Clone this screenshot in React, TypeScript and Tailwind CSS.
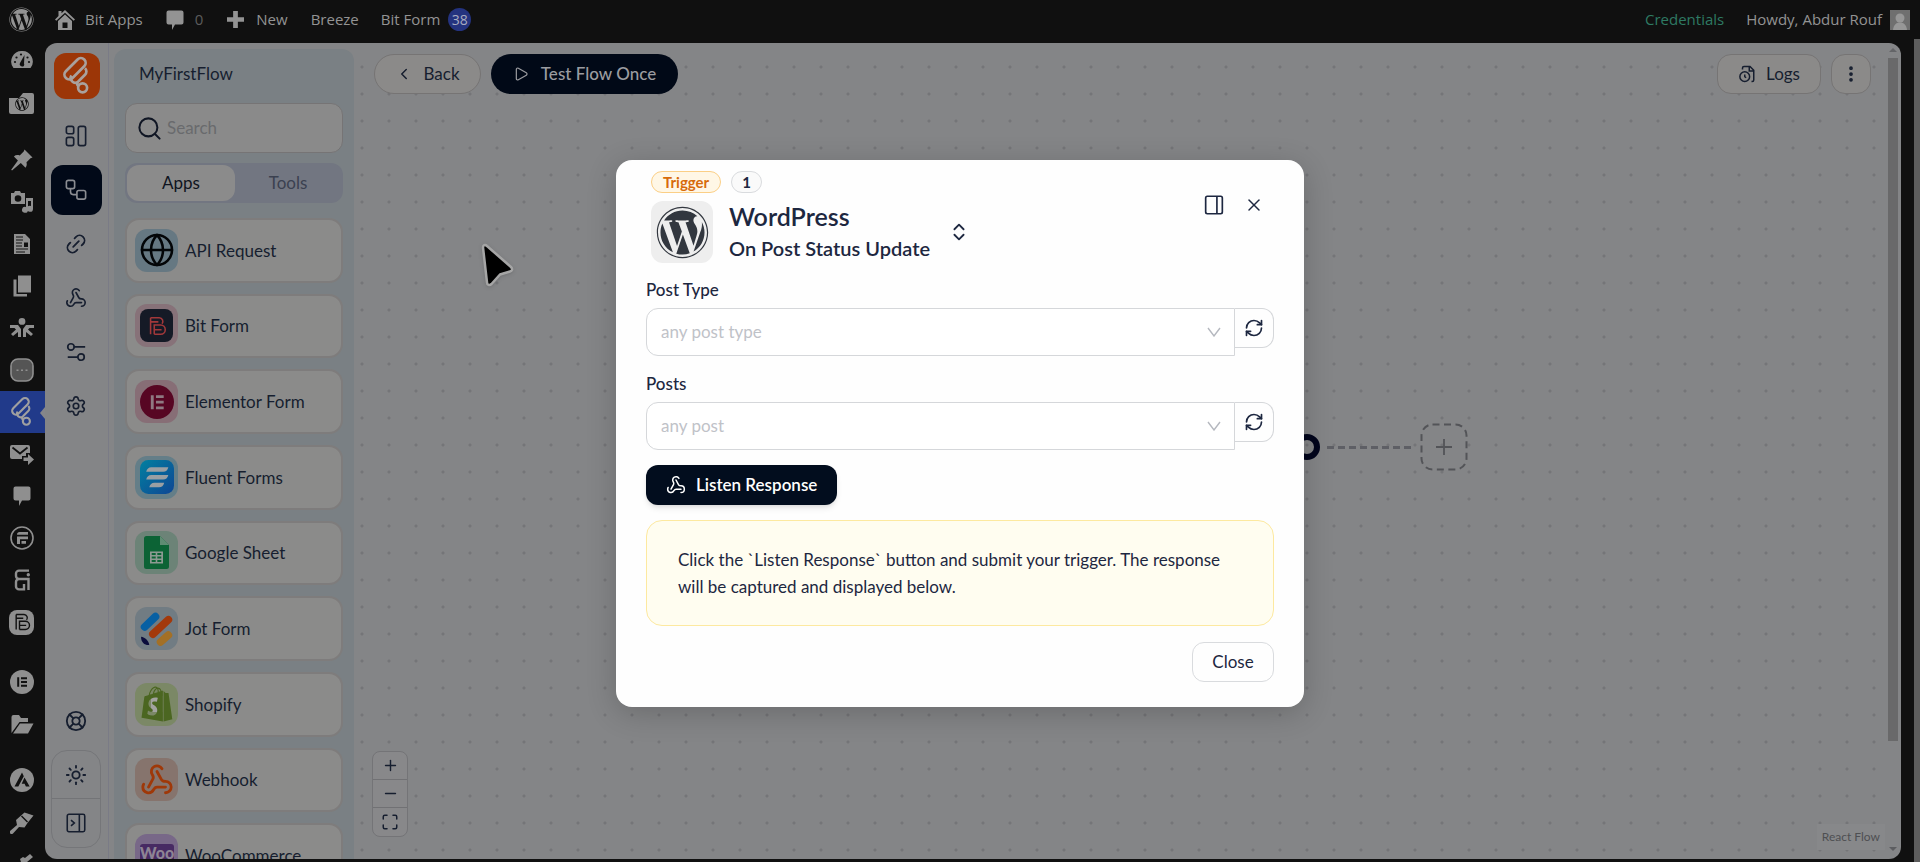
import React from 'react';
import {
  ChevronLeft,
  ChevronsUpDown,
  EllipsisVertical,
  Globe,
  LifeBuoy,
  Link2,
  Maximize,
  Minus,
  Play,
  Plus,
  RefreshCw,
  Search,
  Settings,
  Sun,
  Webhook,
  X,
} from 'lucide-react';
import { FaWordpress, FaWordpressSimple, FaShopify } from 'react-icons/fa';

type IconProps = { className?: string };

const FlowLogo = ({ className }: IconProps) => (
  <svg viewBox="0 0 46 46" className={className} fill="none" stroke="currentColor" strokeWidth="2.7" strokeLinejoin="round">
    <rect x="8" y="11" width="26" height="9.5" rx="4.7" transform="rotate(-45 21 15.7)" />
    <path d="M17.5 22.5a4.6 4.6 0 0 0 6.5 6.3l7-7a4.6 4.6 0 0 0 0-6.6" />
    <path d="M23.5 29.5c-.6 1.6.2 3.3 1.6 4" />
    <circle cx="28.6" cy="34.8" r="4.5" />
  </svg>
);

const BitFormGlyph = ({ className }: IconProps) => (
  <svg viewBox="0 0 24 24" className={className} fill="none" stroke="currentColor" strokeWidth="1.7">
    <path d="M5 3h9.5a4 4 0 0 1 3 6.5M5 3v18M5 7.5h8.5M9 21V11h7a5 5 0 0 1 0 10H9M9 16h8" />
  </svg>
);

const ElementorGlyph = ({ className }: IconProps) => (
  <svg viewBox="0 0 24 24" className={className}>
    <circle cx="12" cy="12" r="12" fill="currentColor" />
    <path d="M7.2 7.2h2v9.6h-2zM11 7.2h6v2h-6zM11 11h6v2h-6zM11 14.8h6v2h-6z" className="fill-[#111111]" />
  </svg>
);

const DashboardIcon = ({ className }: IconProps) => (
  <svg viewBox="0 0 24 24" className={className} fill="none" stroke="currentColor" strokeWidth="1.8">
    <rect x="1.5" y="1.5" width="8" height="8" rx="2" />
    <rect x="1.5" y="13.5" width="8" height="9" rx="2" />
    <rect x="14.5" y="1.5" width="8" height="21" rx="2" />
  </svg>
);

const FlowIcon = ({ className }: IconProps) => (
  <svg viewBox="0 0 24 24" className={className} fill="none" stroke="currentColor" strokeWidth="1.8">
    <rect x="1.5" y="1.5" width="9" height="9" rx="2" />
    <rect x="13" y="12.5" width="9.5" height="9.5" rx="2" />
    <path d="M6 10.5v3.5a3 3 0 0 0 3 3h4" />
  </svg>
);

const SlidersIcon = ({ className }: IconProps) => (
  <svg viewBox="0 0 24 24" className={className} fill="none" stroke="currentColor" strokeWidth="1.9">
    <circle cx="6.5" cy="6.5" r="3.5" />
    <path d="M10 6.5h12M3 17.5h11" />
    <circle cx="17.5" cy="17.5" r="3.5" />
  </svg>
);

const PanelIcon = ({ className }: IconProps) => (
  <svg viewBox="0 0 24 24" className={className} fill="none" stroke="currentColor" strokeWidth="1.9">
    <rect x="1.5" y="1.5" width="21" height="21" rx="2" />
    <path d="M16 1.5v21M6 8.5l4 3.5-4 3.5" />
  </svg>
);

const SidePanelIcon = ({ className }: IconProps) => (
  <svg viewBox="0 0 24 24" className={className} fill="none" stroke="currentColor" strokeWidth="2">
    <rect x="2" y="1.5" width="20" height="21" rx="2" />
    <path d="M15.5 1.5v21" />
  </svg>
);

const LogsIcon = ({ className }: IconProps) => (
  <svg viewBox="0 0 24 24" className={className} fill="none" stroke="currentColor" strokeWidth="2">
    <path d="M6 6V4a2 2 0 0 1 2-2h8l5 5v13a2 2 0 0 1-2 2h-1M15 2v6h6" />
    <circle cx="9" cy="15.5" r="6.5" />
    <path d="M9 12.5v3l1.8 1.5" />
  </svg>
);

// WordPress admin menu glyphs
const wpIcons = {
  gauge: (
    <>
      <path d="M12 3A10.5 10.5 0 0 0 3.5 20h17A10.5 10.5 0 0 0 12 3z" />
      <path d="M12 18.5a2.3 2.3 0 0 1-2-3.5l4.5-8-.5 8.5a2 2 0 0 1-2 3z" className="fill-[#111]" />
      <g className="fill-[#111]">
        <circle cx="5" cy="14" r="1.1" />
        <circle cx="6.5" cy="9.5" r="1.1" />
        <circle cx="11" cy="6.5" r="1.1" />
        <circle cx="17.5" cy="9.5" r="1.1" />
        <circle cx="19" cy="14" r="1.1" />
      </g>
    </>
  ),
  pin: <path d="M14.5 1.5l8 8-2 .8-4 4c.6 2.4.2 4-1 5.5l-4.7-4.7L2 22.5l-.8-.7 6.7-9.4-4-4C5.5 7 7.5 6.8 9.7 7.5l4-4z" />,
  media: (
    <>
      <path fillRule="evenodd" d="M1 3h3l1-2h5l1 2h4v11H1zM8 5.2a3.3 3.3 0 1 0 0 6.6 3.3 3.3 0 0 0 0-6.6z" />
      <path d="M16 8h7v11a3 3 0 1 1-2-3v-5h-3v9a3 3 0 1 1-2-3z" />
    </>
  ),
  post: (
    <path
      fillRule="evenodd"
      d="M4 2h11l5 5v15H4zM6 4.5v1h7v-1zM6 7.5v1h7v-1zM6 10.5v1h6v-1zM14 10.5V15h4v-4.5zM6 13.5v1h6v-1zM6 16.5v1h12v-1zM6 19.5v1h9v-1z"
    />
  ),
  pages: <path d="M8 1.5h13v17H8zM3.5 5.5h3V20H17v2.500H3.500z" />,
  people: (
    <path d="M12 2a3.4 3.4 0 1 1 0 6.800A3.400 3.400 0 0 1 12 2zM0 9h8l3 4v8H8v-5l-5 4-2-2 5-4.500-1.500-1.500H0zM24 9h-8l-3 4v8h3v-5l5 4 2-2-5-4.500 1.500-1.500H24z" />
  ),
  robot: (
    <>
      <rect x="1" y="1" width="22" height="22" rx="7" fill="#555" stroke="currentColor" strokeWidth="1.6" />
      <path d="M6.5 11.5h2V13h-2zM11 11.500h2V13h-2zM15.500 11.500h2V13h-2z" />
    </>
  ),
  mail: (
    <>
      <path d="M2 3h16a2 2 0 0 1 2 2v6h-4v3h-4v3H2a2 2 0 0 1-2-2V5a2 2 0 0 1 2-2z" />
      <path d="M13.5 15.5H18V12l6 5.500-6 5.500v-4h-4.500z" />
      <path d="M2.5 5.5l7.500 6 7.500-6" fill="none" className="stroke-[#111]" strokeWidth="1.8" />
    </>
  ),
  comment: <path d="M5.5 2.5h13a2 2 0 0 1 2 2v10a2 2 0 0 1-2 2H12L9 22v-5.500H5.500a2 2 0 0 1-2-2v-10a2 2 0 0 1 2-2z" />,
  fluent: (
    <>
      <circle cx="12" cy="12" r="11" fill="none" stroke="currentColor" strokeWidth="1.6" />
      <path d="M9.5 6H18v2.700H7C7 7 8 6 9.500 6zM7 10.500h11v2.700h-8V18H7zM11.500 15h4.500v2.700h-4.500z" />
    </>
  ),
  assist: (
    <>
      <path
        d="M19 2.600H9a3 3 0 0 0-3 3V8a3 3 0 0 0 3 3h9.500v11M9 11a3 3 0 0 0-3 3v4.400a3 3 0 0 0 3 3h5V16"
        fill="none"
        stroke="currentColor"
        strokeWidth="2.4"
      />
      <circle cx="18.3" cy="6.8" r="1.7" />
    </>
  ),
  folder: <path d="M1.5 21V5a2 2 0 0 1 2-2H9l2 3h7v4H9.500zM3 21.500L10 11.500h13.500L18 21.500z" />,
  astra: (
    <>
      <circle cx="12" cy="12" r="12" />
      <path d="M4.5 18.5L12 4.500l1.800 3.800-5.500 10.200zM14.500 9.500l5.200 9h-3.800l-1.300-2.700h-2.900z" className="fill-[#111]" />
    </>
  ),
  brush: <path d="M14.5 2.5l9 3-6 7.500-3 4.500-5.500-.5L3 23.500a1.900 1.900 0 0 1-2.700-2.700L7 15l-1-5zM11 6.500l6 6 1-1-6-6z" fillRule="evenodd" />,
  tools: <path d="M20 2l3 3-6 5 2 3-2 2-3-2-8 8-3-3 8-8-1-3 3-2 2 1z" />,
};

type WpIconName = keyof typeof wpIcons;

const WpIcon = ({ name }: { name: WpIconName }) => (
  <svg viewBox="0 0 24 24" className="size-6" fill="currentColor">
    {wpIcons[name]}
  </svg>
);

const MenuItem = ({ label, active, children }: { label: string; active?: boolean; children: React.ReactNode }) => (
  <a
    href="#"
    aria-label={label}
    className={
      active
        ? 'relative flex h-[42px] w-full shrink-0 items-center justify-center bg-[#213a8a] pr-0.5 text-[#a0a0a0]'
        : 'relative flex h-[42px] w-full shrink-0 items-center justify-center pr-0.5'
    }
  >
    {children}
    {active && <span className="absolute top-4 right-0 size-0 border-y-[6px] border-r-[5px] border-y-transparent border-r-[#85868a]" />}
  </a>
);

const AdminBar = () => (
  <header className="flex h-[39px] shrink-0 items-center justify-between pr-2.5 pl-[9px] font-['Open_Sans',sans-serif] text-[15px] text-[#939393]">
    <div className="flex items-center">
      <a href="#" aria-label="About WordPress">
        <FaWordpress className="size-[25px]" />
      </a>
      <a href="#" className="ml-[21px] flex items-center gap-[10px]">
        <svg viewBox="0 0 20 20" className="size-5" fill="currentColor">
          <path d="M10 0l10 9.5-1.300 1.300L10 2.800l-8.700 8L0 9.500 3.500 6V1h3v2.300zM10 4.500l7 6.500v9H3v-9zm-2.500 8V18h5v-5.500z" fillRule="evenodd" />
        </svg>
        Bit Apps
      </a>
      <a href="#" className="ml-5 flex items-center gap-2 text-[#5c5c5c]">
        <svg viewBox="0 0 24 24" className="size-6 text-[#939393]" fill="currentColor">
          {wpIcons.comment}
        </svg>
        0
      </a>
      <a href="#" className="ml-6 flex items-center gap-3">
        <svg viewBox="0 0 18 18" className="size-[17px]" fill="currentColor">
          <path d="M6.5 0h5v6.500H18v5h-6.500V18h-5v-6.500H0v-5h6.500z" />
        </svg>
        New
      </a>
      <a href="#" className="ml-[23px]">Breeze</a>
      <a href="#" className="ml-[22px] flex items-center gap-2">
        Bit Form
        <span className="grid size-[23px] place-items-center rounded-full bg-[#24337f] text-sm leading-none text-[#a8abc0]">38</span>
      </a>
    </div>
    <div className="flex items-center">
      <a href="#" className="text-[#2e7a63]">Credentials</a>
      <a href="#" className="ml-[22px] flex items-center gap-2">
        Howdy, Abdur Rouf
        <svg viewBox="0 0 20 20" className="size-5">
          <rect width="20" height="20" fill="#6f6f6f" />
          <circle cx="10" cy="8" r="4.5" fill="#979797" />
          <path d="M3 20c.5-5 3-7.500 7-7.500s6.500 2.500 7 7.500z" fill="#979797" />
        </svg>
      </a>
    </div>
  </header>
);

const AdminMenu = () => (
  <nav className="flex w-[45px] shrink-0 flex-col overflow-hidden text-[#8f8f8f]">
    <div className="shrink-0">
      <MenuItem label="Dashboard"><WpIcon name="gauge" /></MenuItem>
      <MenuItem label="WordPress">
        <span className="relative grid size-[25px] place-items-center">
          <svg viewBox="0 0 25 25" className="absolute inset-0" fill="currentColor">
            <path d="M0 8h10l4-5h9a2 2 0 0 1 2 2v17a2 2 0 0 1-2 2H2a2 2 0 0 1-2-2z" />
          </svg>
          <FaWordpressSimple className="relative mt-1 size-3.5 text-[#111]" />
        </span>
      </MenuItem>
    </div>
    <div className="mt-4 shrink-0">
      <MenuItem label="Posts"><WpIcon name="pin" /></MenuItem>
      <MenuItem label="Media"><WpIcon name="media" /></MenuItem>
      <MenuItem label="Articles"><WpIcon name="post" /></MenuItem>
      <MenuItem label="Pages"><WpIcon name="pages" /></MenuItem>
      <MenuItem label="Community"><WpIcon name="people" /></MenuItem>
      <MenuItem label="Assistant"><WpIcon name="robot" /></MenuItem>
      <MenuItem label="Bit Flows" active><FlowLogo className="size-9" /></MenuItem>
      <MenuItem label="Mail"><WpIcon name="mail" /></MenuItem>
      <MenuItem label="Comments"><WpIcon name="comment" /></MenuItem>
      <MenuItem label="Fluent Forms"><WpIcon name="fluent" /></MenuItem>
      <MenuItem label="Bit Integrations"><WpIcon name="assist" /></MenuItem>
      <MenuItem label="Bit Form">
        <span className="grid size-[25px] place-items-center rounded-lg bg-[#8f8f8f]">
          <BitFormGlyph className="size-5 text-[#111]" />
        </span>
      </MenuItem>
    </div>
    <div className="mt-[18px] shrink-0">
      <MenuItem label="Elementor"><ElementorGlyph className="size-6" /></MenuItem>
      <MenuItem label="Templates"><WpIcon name="folder" /></MenuItem>
    </div>
    <div className="mt-3.5 shrink-0">
      <MenuItem label="Astra"><WpIcon name="astra" /></MenuItem>
      <MenuItem label="Appearance"><WpIcon name="brush" /></MenuItem>
      <MenuItem label="Plugins"><WpIcon name="tools" /></MenuItem>
    </div>
  </nav>
);

const RailButton = ({ label, children }: { label: string; children: React.ReactNode }) => (
  <button aria-label={label} className="grid h-[54px] w-[51px] place-items-center">
    {children}
  </button>
);

const Rail = () => (
  <div className="flex w-16 shrink-0 flex-col items-center border-r border-[#7a7b86] pt-2.5 pb-[11px]">
    <div className="grid size-[46px] place-items-center rounded-xl bg-[#9c3607] text-[#a9a19d]">
      <FlowLogo className="size-[46px]" />
    </div>
    <div className="mt-2.5 flex flex-col items-center pr-px">
      <RailButton label="Dashboard"><DashboardIcon className="size-[22px]" /></RailButton>
      <button aria-label="Flows" className="my-0.5 grid h-[50px] w-[51px] place-items-center rounded-xl bg-[#010918] text-[#8b8d92]">
        <FlowIcon className="size-[22px]" />
      </button>
      <RailButton label="Connections"><Link2 className="size-6 -rotate-45" strokeWidth={1.8} /></RailButton>
      <RailButton label="Webhooks"><Webhook className="size-[22px]" strokeWidth={1.8} /></RailButton>
      <RailButton label="Variables"><SlidersIcon className="size-[22px]" /></RailButton>
      <RailButton label="Settings"><Settings className="size-[22px]" strokeWidth={1.8} /></RailButton>
    </div>
    <div className="mt-auto flex flex-col items-center pr-px">
      <RailButton label="Support"><LifeBuoy className="size-[22px]" strokeWidth={2} /></RailButton>
      <div className="mt-0.5 flex w-[50px] flex-col items-center divide-y divide-[#737477] rounded-2xl border border-[#757679]">
        <button aria-label="Theme" className="grid h-12 w-full place-items-center"><Sun className="size-[22px]" strokeWidth={2} /></button>
        <button aria-label="Expand menu" className="grid h-12 w-full place-items-center"><PanelIcon className="size-5" /></button>
      </div>
    </div>
  </div>
);

const apps = [
  { name: 'API Request', tile: 'bg-[#667882]', icon: <Globe className="size-9 text-[#030507]" strokeWidth={1.7} /> },
  {
    name: 'Bit Form',
    tile: 'bg-[#877279]',
    icon: (
      <span className="grid size-[33px] place-items-center rounded-lg bg-[#151a26]">
        <BitFormGlyph className="size-[22px] text-[#a1383a]" />
      </span>
    ),
  },
  {
    name: 'Elementor Form',
    tile: 'bg-[#876e76]',
    icon: (
      <svg viewBox="0 0 33 33" className="size-[34px]">
        <circle cx="16.5" cy="16.5" r="16.5" fill="#570623" />
        <path d="M10.5 10h2.800v13.500h-2.800zM15.500 10h7.500v2.700h-7.500zM15.500 15.300h7.500V18h-7.500zM15.500 20.800h7.500v2.700h-7.500z" fill="#8f7a82" />
      </svg>
    ),
  },
  {
    name: 'Fluent Forms',
    tile: 'bg-[#647e88]',
    icon: (
      <svg viewBox="0 0 33 33" className="size-[34px]">
        <defs>
          <linearGradient id="fluent" x1="0" y1="0" x2="1" y2="1">
            <stop offset="0" stopColor="#0280a0" />
            <stop offset="1" stopColor="#0f4694" />
          </linearGradient>
        </defs>
        <rect width="33" height="33" rx="8" fill="url(#fluent)" />
        <path d="M6 11.5c.8-3 2.300-4.500 5-4.500h16.500c-.8 3-2.300 4.500-5 4.500zM6 19c.8-3 2.300-4.500 5-4.500h16.500c-.8 3-2.300 4.500-5 4.500zM9 26.500c.8-3 2.300-4.500 5-4.500h9.500c-.8 3-2.300 4.500-5 4.500z" fill="#9a9fa3" />
      </svg>
    ),
  },
  {
    name: 'Google Sheet',
    tile: 'bg-[#6c8377]',
    icon: (
      <svg viewBox="0 0 25 33" className="h-[33px] w-[25px]">
        <path d="M2.5 0H16l9 9v21.500a2.500 2.500 0 0 1-2.500 2.500h-20A2.500 2.500 0 0 1 0 30.500v-28A2.500 2.500 0 0 1 2.500 0z" fill="#0c6335" />
        <path d="M16 0l9 9h-9z" fill="#5f8c73" />
        <path fillRule="evenodd" d="M6 15.5h13v12H6zM7.700 17v2h4v-2zM13.300 17v2h4v-2zM7.700 20.500v2h4v-2zM13.300 20.500v2h4v-2zM7.700 24v2h4v-2zM13.300 24v2h4v-2z" fill="#8d9a92" />
      </svg>
    ),
  },
  {
    name: 'Jot Form',
    tile: 'bg-[#717c83]',
    icon: (
      <svg viewBox="0 0 33 33" className="size-[34px]" strokeLinecap="round" strokeWidth="7.5">
        <path d="M4.5 14.5L15 4.500" stroke="#0860a3" />
        <path d="M12.5 21.5l15-14" stroke="#a3390b" />
        <path d="M20 29l7.500-6.500" stroke="#a37026" />
        <path d="M1 24c4 .5 7.500 4 8 8-4 .5-8-2-8-8z" fill="#0b0d3c" />
      </svg>
    ),
  },
  {
    name: 'Shopify',
    tile: 'bg-[#7b8866]',
    icon: (
      <span className="relative grid size-9 place-items-center">
        <span className="absolute inset-x-3 inset-y-2.5 bg-[#a3a3a0]" />
        <FaShopify className="relative size-9 text-[#4b6621]" />
      </span>
    ),
  },
  { name: 'Webhook', tile: 'bg-[#86746d]', icon: <Webhook className="size-[34px] text-[#9f3808]" strokeWidth={2} /> },
  {
    name: 'WooCommerce',
    tile: 'bg-[#786888]',
    icon: (
      <svg viewBox="0 0 34 24" className="h-6 w-[34px]">
        <rect width="34" height="19" rx="3" fill="#472a63" />
        <path d="M18 18l6 6v-6z" fill="#472a63" />
        <text x="17" y="15" textAnchor="middle" className="font-['Lato',sans-serif] text-base font-black" fill="#8d8494">Woo</text>
      </svg>
    ),
  },
];

const AppPanel = () => (
  <aside className="mt-1.5 ml-[5px] flex w-60 shrink-0 flex-col overflow-hidden rounded-t-xl bg-[#7a8084] px-[11px]">
    <h1 className="h-[54px] shrink-0 pt-[13px] pl-3.5 text-[17px] leading-6">MyFirstFlow</h1>
    <label className="flex h-[50px] shrink-0 items-center gap-1 rounded-xl border border-[#767475] bg-[#8a8a8a] px-2.5">
      <Search className="size-[27px] shrink-0 text-[#101624]" strokeWidth={1.8} />
      <input aria-label="Search" placeholder="Search" className="w-full bg-transparent text-[17px] outline-none placeholder:text-[#696a6d]" />
    </label>
    <div className="mt-2.5 flex h-10 shrink-0 rounded-xl bg-[#727681] p-0.5 text-[17px]">
      <button className="w-[108px] rounded-xl bg-[#8b8b8b] text-[#0f1420]">Apps</button>
      <button className="flex-1 text-[#3b4150]">Tools</button>
    </div>
    <ul className="mt-[15px] grid h-[670px] shrink-0 auto-rows-fr gap-[11px]">
      {apps.map((app) => (
        <li key={app.name} className="flex items-center gap-[7px] rounded-[14px] border-2 border-[#7e7c7c] bg-[#8b8b8a] pl-2 text-[17px]">
          <span className={`grid size-[43px] place-items-center rounded-xl ${app.tile}`}>{app.icon}</span>
          {app.name}
        </li>
      ))}
    </ul>
  </aside>
);

const Canvas = () => (
  <main className="relative flex min-w-0 flex-1 flex-col justify-between bg-[radial-gradient(circle_at_8px_24px,#747578_1px,transparent_2px)] bg-size-[27px_27px]">
    <div className="flex items-center justify-between pt-[11px] pr-[17px] pl-5">
      <div className="flex gap-2.5">
        <button className="flex h-10 w-[107px] items-center justify-center gap-2.5 rounded-full border border-[#767474] bg-[#8b8a89] text-[17px]">
          <ChevronLeft className="size-[18px]" />
          Back
        </button>
        <button className="flex h-10 w-[187px] items-center justify-center gap-3 rounded-full bg-[#010917] text-[17px] font-medium text-[#9b9ca0]">
          <Play className="size-4" strokeWidth={1.8} />
          Test Flow Once
        </button>
      </div>
      <div className="flex gap-2.5">
        <button className="flex h-10 w-[104px] items-center justify-center gap-2.5 rounded-[14px] border border-[#767474] bg-[#8b8a89] text-[17px]">
          <LogsIcon className="size-[18px]" />
          Logs
        </button>
        <button aria-label="More" className="grid size-10 place-items-center rounded-[14px] border border-[#767474] bg-[#8b8a89]">
          <EllipsisVertical className="size-5" strokeWidth={2.5} />
        </button>
      </div>
    </div>

    {/* flow nodes */}
    <div className="absolute top-[391px] left-[940px] size-[26px] rounded-full border-[6px] border-[#02051c]" />
    <svg className="absolute top-[403px] left-[973px] h-[3px] w-[88px]">
      <path d="M0 1.5h88" stroke="#5e5f65" strokeWidth="3" strokeDasharray="7 4" />
    </svg>
    <button aria-label="Add node" className="absolute top-[380px] left-[1066px] grid size-12 place-items-center text-[#535458]">
      <svg viewBox="0 0 48 48" className="size-12" fill="none" stroke="currentColor">
        <rect x="1.5" y="1.5" width="45" height="45" rx="11" strokeWidth="2" strokeDasharray="7 4.5" />
        <path d="M24 16v16M16 24h16" strokeWidth="1.8" />
      </svg>
    </button>

    <div className="flex items-end justify-between pr-[3px] pb-[9px] pl-[18px]">
      <div className="mb-[13px] flex w-9 flex-col divide-y divide-[#717174] rounded-lg border border-[#747477] bg-[#88888a]">
        <button aria-label="Zoom in" className="grid h-7 place-items-center"><Plus className="size-[17px]" /></button>
        <button aria-label="Zoom out" className="grid h-7 place-items-center"><Minus className="size-[17px]" /></button>
        <button aria-label="Fit view" className="grid h-7 place-items-center"><Maximize className="size-[18px]" /></button>
      </div>
      <a href="#" className="bg-[#87888a] px-[5px] py-1 text-xs leading-[18px] text-[#4e4f52]">React Flow</a>
    </div>
  </main>
);

const ScrollTrack = () => (
  <div className="mr-[3px] flex w-2.5 flex-col items-center pt-[5px] pb-2">
    <span className="size-0 border-x-[4px] border-b-[4px] border-x-transparent border-b-[#646568]" />
    <span className="mt-1.5 h-[85%] w-full bg-[#69696a]" />
    <span className="mt-auto size-0 border-x-[4px] border-t-[4px] border-x-transparent border-t-[#5c5d60]" />
  </div>
);

const SelectField = ({ id, label, placeholder }: { id: string; label: string; placeholder: string }) => (
  <div className="flex flex-col">
    <label htmlFor={id} className="text-[17px] leading-6 font-medium">{label}</label>
    <div className="mt-1.5 flex items-start">
      <div className="relative flex-1">
        <select id={id} className="h-12 w-full appearance-none rounded-l-xl border border-[#d5d7da] bg-white px-3.5 text-[17px] text-[#bfc2c8]">
          <option>{placeholder}</option>
        </select>
        <svg viewBox="0 0 14 10" className="pointer-events-none absolute top-[19px] right-3.5 h-2.5 w-3.5" fill="none" stroke="#b5b8bf" strokeWidth="1.4">
          <path d="M1 1l6 8 6-8" />
        </svg>
      </div>
      <button aria-label={`Refresh ${label}`} className="grid h-10 w-[39px] place-items-center rounded-r-xl border border-l-0 border-[#d5d7da]">
        <RefreshCw className="size-5" strokeWidth={2} />
      </button>
    </div>
  </div>
);

const TriggerDialog = () => (
  <div className="absolute inset-0 flex items-center justify-center pt-[5px]">
    <section
      role="dialog"
      aria-label="WordPress trigger"
      className="w-[688px] rounded-2xl bg-[#fefefe] px-[30px] pt-[11px] pb-[25px] text-[#1d2740] shadow-[0_6px_30px_rgba(0,0,0,0.2)]"
    >
      <div className="flex items-start justify-between">
        <div className="pl-[5px]">
          <div className="flex gap-2.5 text-[15px] leading-5 font-bold">
            <span className="rounded-full border border-[#fbcf86] bg-[#fff7e6] px-[11px] text-[#d76b0c]">Trigger</span>
            <span className="rounded-full border border-[#d9dbde] bg-[#fafafa] px-2.5">1</span>
          </div>
          <div className="mt-[7px] flex items-center gap-4">
            <div className="grid size-[62px] place-items-center rounded-xl bg-[#eeeeee]">
              <FaWordpress className="size-[53px] text-[#32373f]" />
            </div>
            <button className="flex items-center gap-[18px] text-left font-semibold">
              <span className="flex flex-col">
                <span className="text-[25px] leading-8">WordPress</span>
                <span className="text-xl leading-8">On Post Status Update</span>
              </span>
              <ChevronsUpDown className="size-[22px]" />
            </button>
          </div>
        </div>
        <div className="mt-6 mr-2.5 flex items-center gap-5">
          <button aria-label="Dock panel"><SidePanelIcon className="size-5" /></button>
          <button aria-label="Close dialog"><X className="size-5" strokeWidth={1.8} /></button>
        </div>
      </div>

      <div className="mt-3.5 flex flex-col gap-4">
        <SelectField id="post-type" label="Post Type" placeholder="any post type" />
        <SelectField id="posts" label="Posts" placeholder="any post" />
      </div>

      <button className="mt-[15px] flex h-10 items-center gap-2.5 rounded-xl bg-[#020d1e] px-5 text-[17px] font-semibold text-white shadow-md">
        <Webhook className="size-5" strokeWidth={1.8} />
        Listen Response
      </button>

      <p className="mt-[15px] rounded-2xl border border-[#fde9a0] bg-[#fffdf0] px-[31px] py-[25px] text-[17px] leading-[27px]">
        Click the `Listen Response` button and submit your trigger. The response will be captured and displayed below.
      </p>

      <div className="mt-4 flex justify-end">
        <button className="h-10 w-[82px] rounded-xl border border-[#d9dbde] text-[17px]">Close</button>
      </div>
    </section>
  </div>
);

const Cursor = () => (
  <svg viewBox="0 0 38 48" className="pointer-events-none absolute top-[241px] left-[480px] h-12 w-[38px] drop-shadow">
    <path d="M3 5.5C3 3 5 2 7 4l24 21c2 2 1 4-1 4.500l-10 3-8.500 9.500c-2 2-4.500 1-4.500-1.500z" transform="translate(0 1)" fill="#000" stroke="#a5a5a5" strokeWidth="2.5" strokeLinejoin="round" />
  </svg>
);

const App = () => (
  <div className="relative flex h-screen flex-col overflow-hidden bg-[#101010] font-['Lato',sans-serif] text-[#161e2f]">
    <AdminBar />
    <div className="flex min-h-0 flex-1">
      <AdminMenu />
      <div className="flex min-w-0 flex-1 pt-1 pr-[13px] pb-[3px]">
        <div className="flex min-w-0 flex-1 overflow-hidden rounded-xl bg-[#848587]">
          <Rail />
          <AppPanel />
          <Canvas />
          <ScrollTrack />
        </div>
      </div>
      <div className="w-1.5 bg-[#5d5d5d]" />
    </div>
    <TriggerDialog />
    <Cursor />
  </div>
);

export default App;
